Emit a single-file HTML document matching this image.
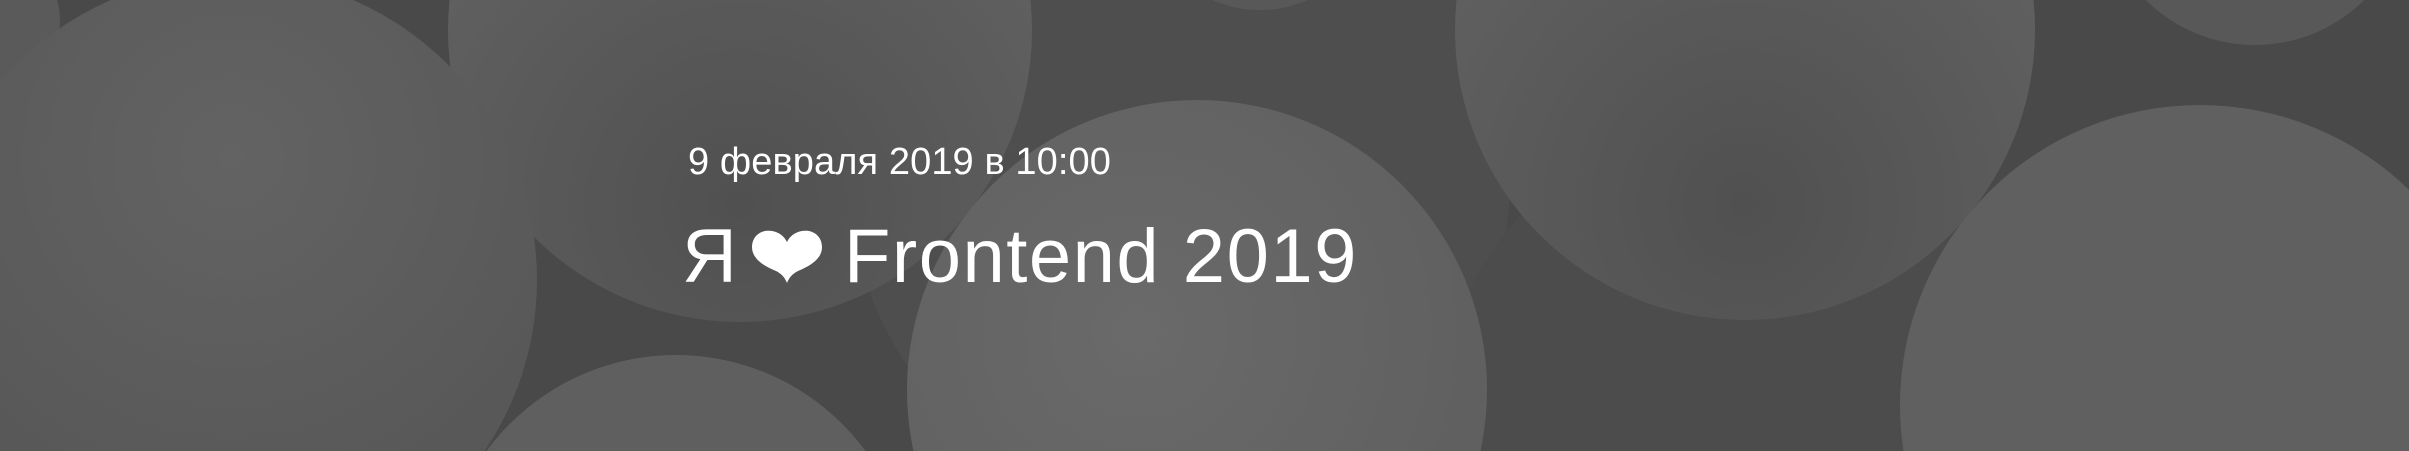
<!DOCTYPE html>
<html><head><meta charset="utf-8"><style>
html,body{margin:0;padding:0;width:2409px;height:451px;overflow:hidden;background:#494949;position:relative}
svg.bg{position:absolute;left:0;top:0;display:block}
.t{position:absolute;color:#fff;font-family:"Liberation Sans","DejaVu Sans",sans-serif;white-space:nowrap;line-height:1}
#d{left:688px;top:143px;font-size:38px;letter-spacing:0.1px}
#ya{left:682px;top:219px;font-size:76px}
#fr{left:844px;top:219px;font-size:76px;letter-spacing:1.5px}
#heart{position:absolute;left:752px;top:230px;display:block}
</style></head><body>
<svg class="bg" width="2409" height="451" viewBox="0 0 2409 451">
<defs>
<radialGradient id="g1" cx="0.5" cy="0.3" r="0.7"><stop offset="0" stop-color="#636363"/><stop offset="1" stop-color="#565656"/></radialGradient>
<radialGradient id="g2" cx="0.5" cy="0.8" r="0.6"><stop offset="0" stop-color="#505050"/><stop offset="1" stop-color="#5f5f5f"/></radialGradient>
<radialGradient id="g3" cx="0.4" cy="0.4" r="0.7"><stop offset="0" stop-color="#6a6a6a"/><stop offset="1" stop-color="#5e5e5e"/></radialGradient>
</defs>
<rect width="2409" height="451" fill="#494949"/>
<circle cx="-10" cy="20" r="70" fill="#5a5a5a"/>
<circle cx="1180" cy="180" r="330" fill="#4e4e4e"/>
<circle cx="1740" cy="420" r="300" fill="#4c4c4c"/>
<circle cx="1260" cy="-110" r="120" fill="#585858"/>
<circle cx="2255" cy="-110" r="155" fill="#585858"/>
<circle cx="740" cy="30" r="292" fill="url(#g2)"/>
<circle cx="1745" cy="30" r="290" fill="url(#g2)"/>
<circle cx="232" cy="280" r="305" fill="url(#g1)"/>
<circle cx="676" cy="590" r="235" fill="#5f5f5f"/>
<circle cx="1197" cy="390" r="290" fill="url(#g3)"/>
<circle cx="2200" cy="405" r="300" fill="#606060"/>
</svg>
<div class="t" id="d">9 февраля 2019 в 10:00</div>
<div class="t" id="ya">Я</div>
<svg id="heart" width="70" height="54" viewBox="0 0 70 54"><path d="M35 12 C30 2 20 0 13 1 C4 3 0 10 0 17 C0 29 12 36 24 41 C30 44 33 48 35 53 C37 48 40 44 46 41 C58 36 70 29 70 17 C70 10 66 3 57 1 C50 0 40 2 35 12 Z" fill="#fff"/></svg>
<div class="t" id="fr">Frontend 2019</div>
</body></html>
